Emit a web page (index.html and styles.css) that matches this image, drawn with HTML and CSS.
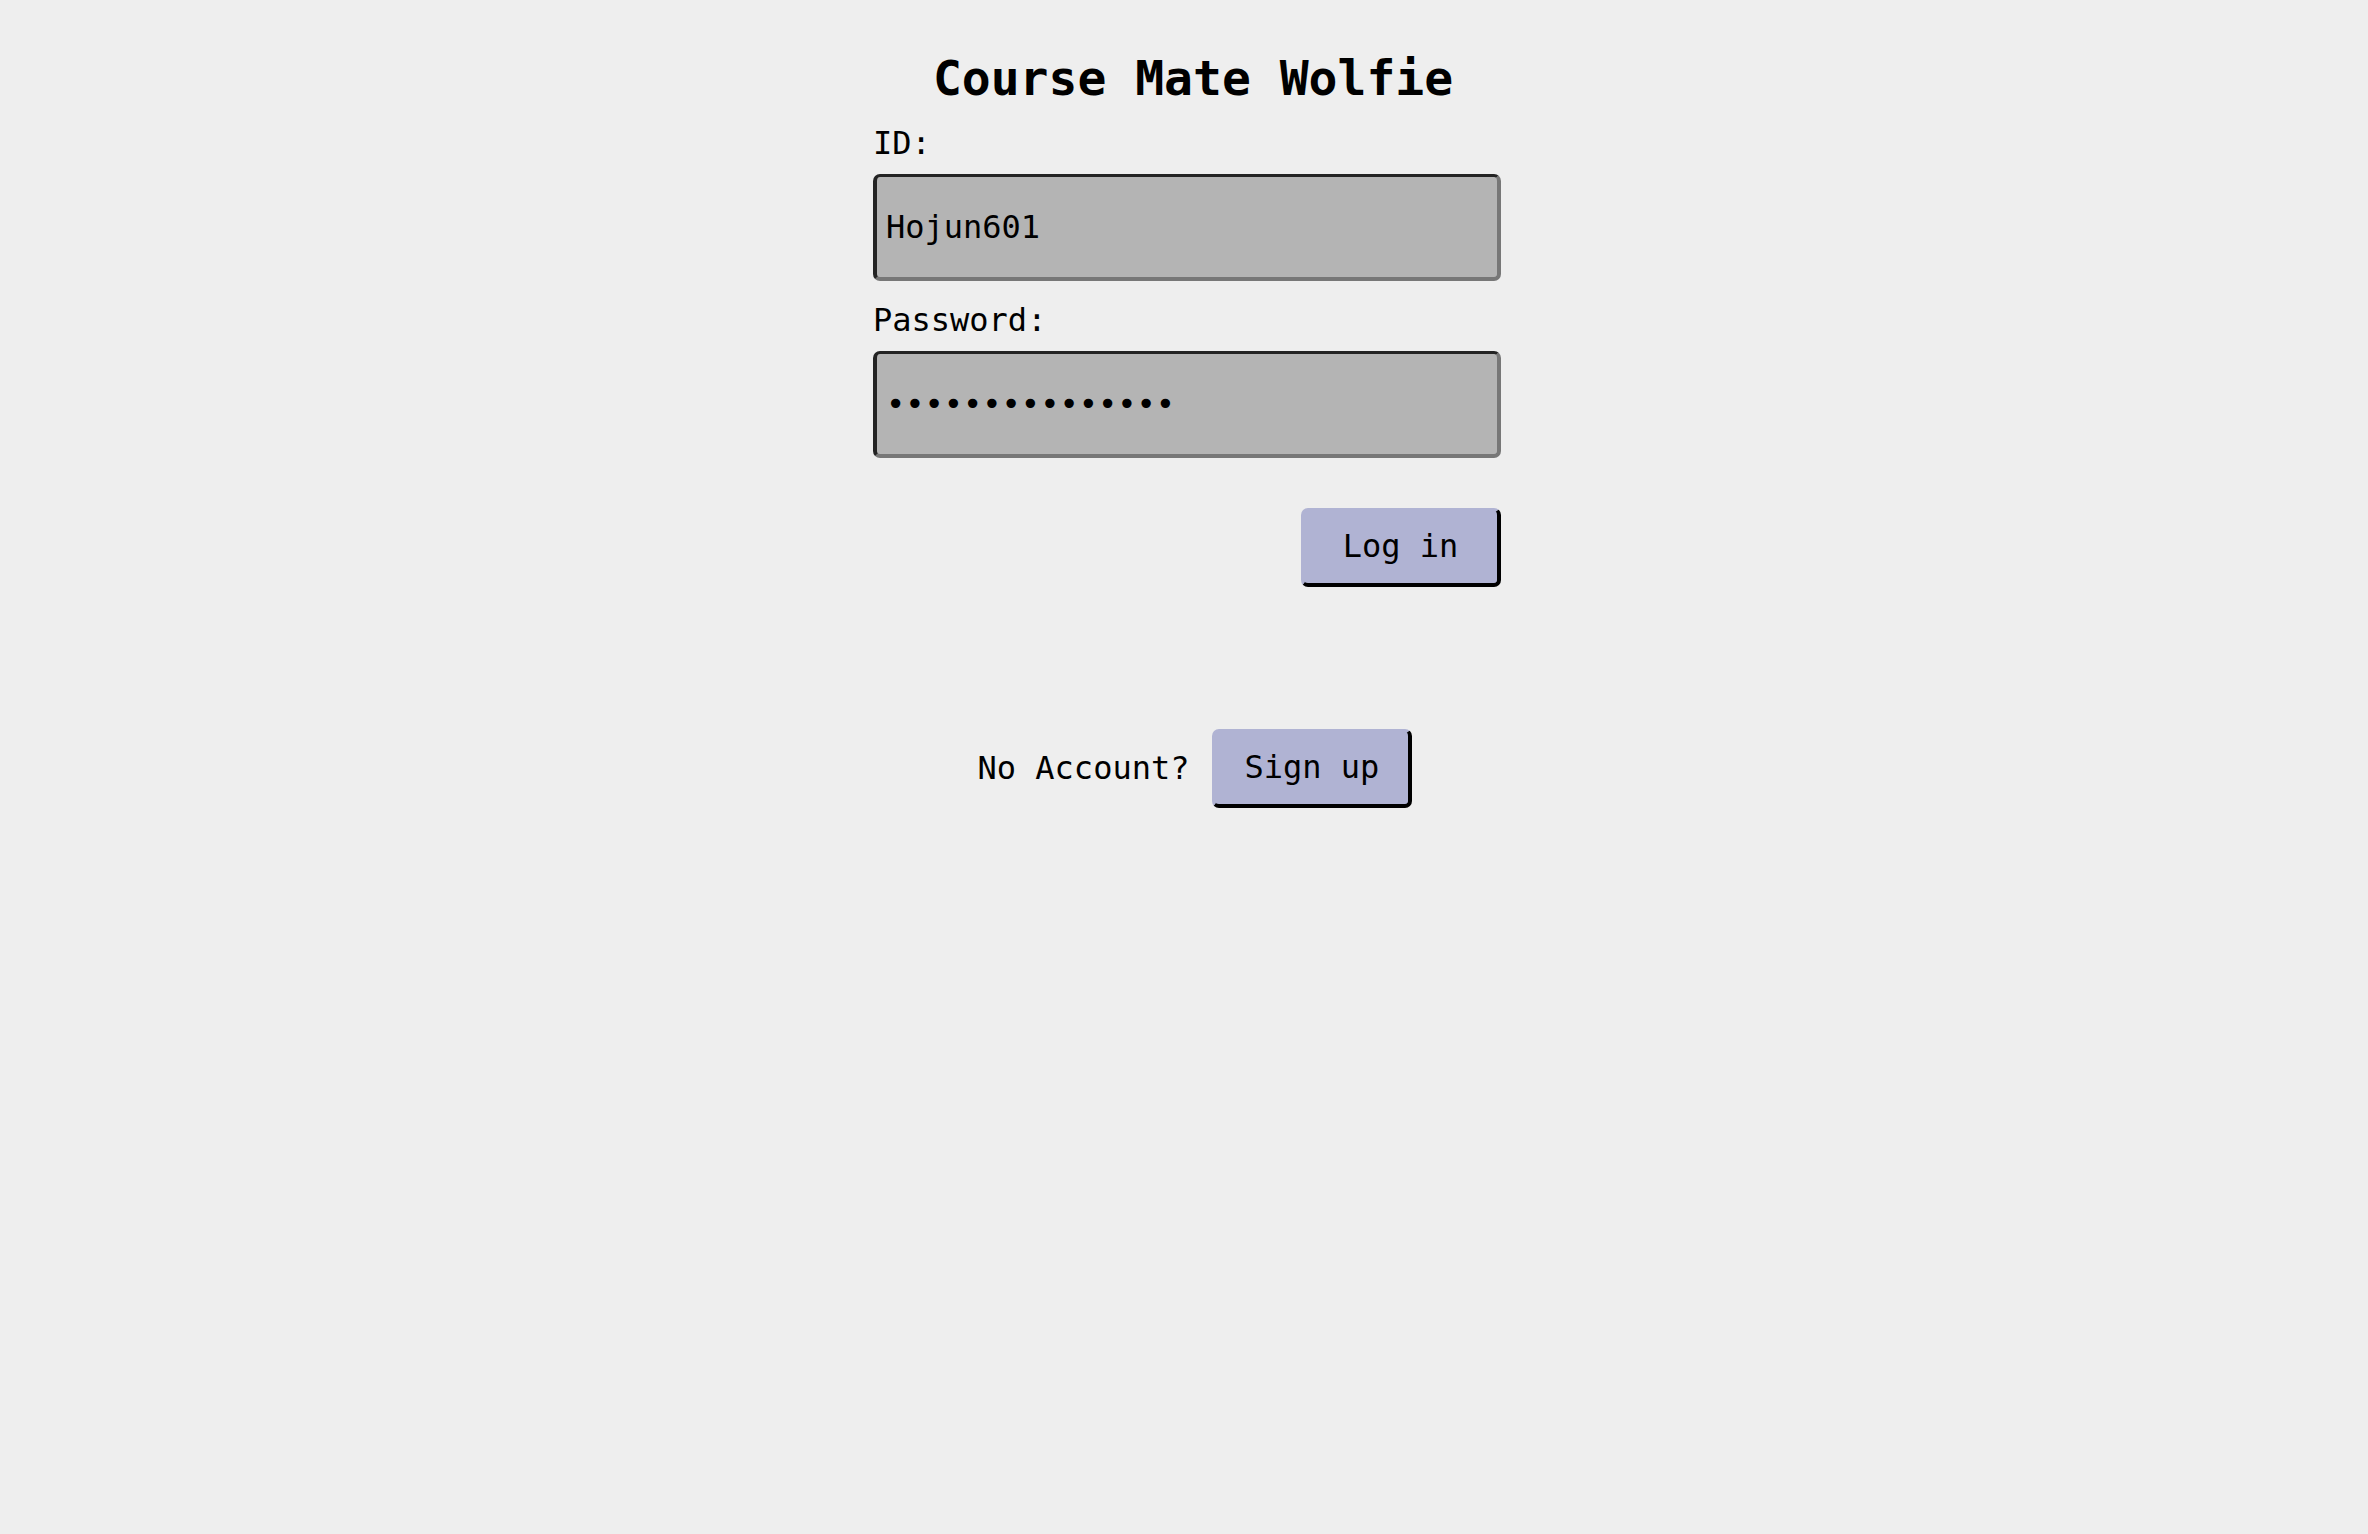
FILE: index.html
```html
<!DOCTYPE html>
<html lang="en">
<head>
<meta charset="utf-8">
<title>Course Mate Wolfie</title>
<link rel="stylesheet" href="styles.css">
</head>
<body>
<main class="page">
  <h1 class="title">Course Mate Wolfie</h1>
  <form class="login">
    <label class="label" for="uid">ID:</label>
    <input class="field" id="uid" type="text" value="Hojun601">
    <label class="label label-pw" for="pw">Password:</label>
    <input class="field" id="pw" type="password" value="abcdefghijklmno">
    <div class="actions"><button class="btn" type="button">Log in</button></div>
  </form>
  <div class="signup">
    <span class="signup-text">No Account?</span>
    <button class="btn" type="button">Sign up</button>
  </div>
</main>
</body>
</html>
```

FILE: styles.css
```css
html, body {
  background: #eeeeee;
}
body {
  margin: 0;
  padding-left: 6px;
  font-family: "DejaVu Sans Mono", monospace;
  color: #000;
}
.page {
  width: 628px;
  margin: 0 auto;
  padding-top: 50px;
}
.title {
  margin: 0;
  font-size: 48px;
  line-height: 56px;
  font-weight: bold;
  text-align: center;
  padding-left: 12px;
}
.login {
  display: flex;
  flex-direction: column;
  margin: 19px 0 0;
}
.label {
  display: block;
  font-size: 32px;
  line-height: 37px;
  margin-bottom: 12px;
}
.label-pw {
  margin-top: 21px;
}
.field {
  box-sizing: border-box;
  width: 100%;
  height: 107px;
  margin: 0;
  padding: 0 9px;
  border-style: solid;
  border-width: 3px 4px 4px 4px;
  border-color: #232323 #777777 #777777 #232323;
  border-radius: 7px;
  background: #b4b4b4;
  font-family: "DejaVu Sans Mono", monospace;
  font-size: 32px;
  color: #000;
  outline: none;
}
.actions {
  display: flex;
  justify-content: flex-end;
  margin-top: 50px;
}
.btn {
  box-sizing: border-box;
  width: 200px;
  height: 79px;
  margin: 0;
  padding: 0 0 2px;
  border-style: solid;
  border-width: 3px 4px 4px 3px;
  border-color: #b0b3d3 #000 #000 #b0b3d3;
  border-radius: 7px;
  background: #b0b3d3;
  font-family: "DejaVu Sans Mono", monospace;
  font-size: 32px;
  color: #000;
}
.signup {
  display: flex;
  align-items: center;
  justify-content: center;
  gap: 23px;
  margin-top: 142px;
  padding-left: 16px;
}
.signup-text {
  font-size: 32px;
  line-height: 37px;
}
```
